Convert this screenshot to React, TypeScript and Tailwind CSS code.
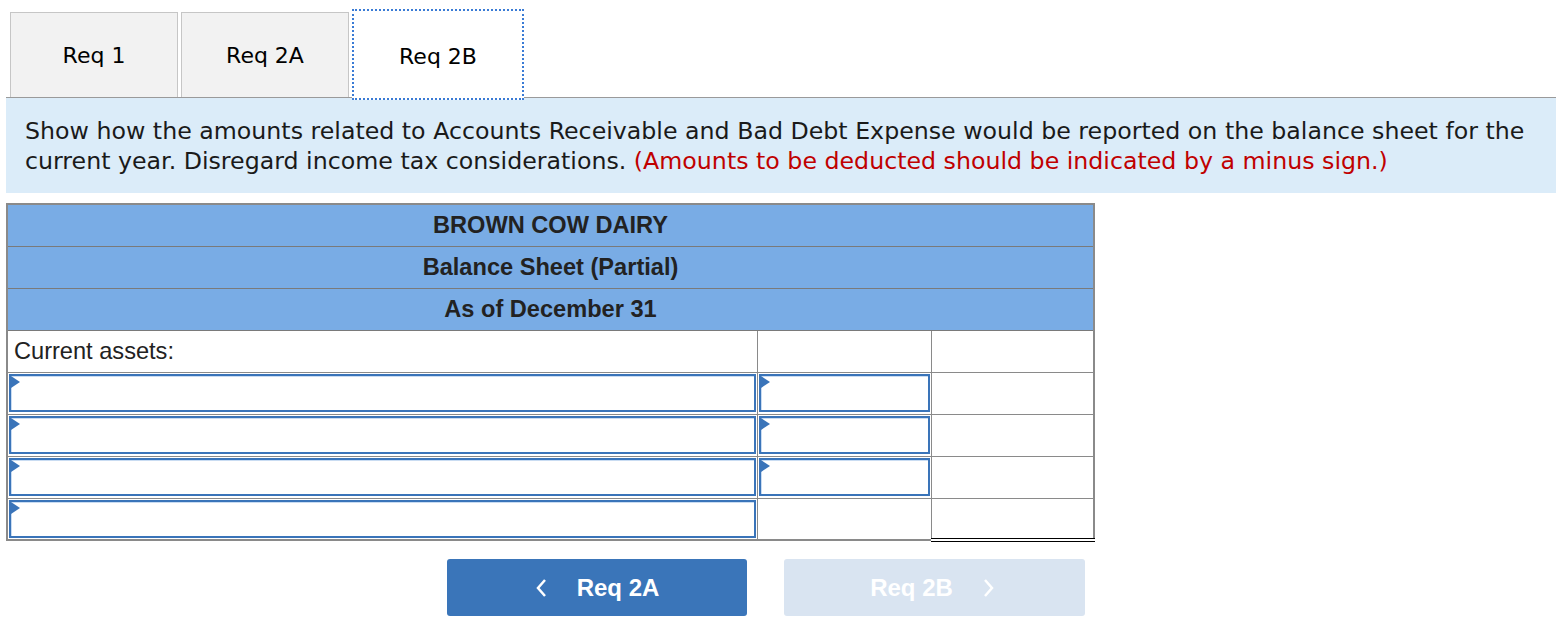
import React from 'react';

const Tab: React.FC<{ label: string; active?: boolean }> = ({ label, active }) =>
  active ? (
    <div className="relative z-10 h-[91px] w-[172px] -mt-[3px] -mb-[3px] pt-[4px] border-2 border-dotted border-[#3a7bd5] bg-white flex items-center justify-center text-[22px] text-black">
      {label}
    </div>
  ) : (
    <div className="h-[85px] w-[168px] border border-[#c6c6c6] border-b-0 bg-[#f2f2f2] flex items-center justify-center text-[22px] text-black">
      {label}
    </div>
  );

const Marker = () => (
  <svg className="absolute left-0 top-0" width="9" height="14" viewBox="0 0 9 14">
    <polygon points="0,0 9,6 0,12" fill="#3a74b9" />
  </svg>
);

const InputCell: React.FC = () => (
  <div className="relative h-[38px] m-[1px] border-2 border-[#3a74b9] bg-white shadow-[inset_1px_1px_0_#c9dcf2]">
    <Marker />
  </div>
);

const rows = [
  { a: true, b: true },
  { a: true, b: true },
  { a: true, b: true },
  { a: true, b: false },
];

const App: React.FC = () => {
  return (
    <div className="w-[1560px] h-[636px] bg-white font-['DejaVu_Sans',sans-serif] pt-[12px]">
      <div className="flex items-end pl-[10px] gap-[3px]">
        <Tab label="Req 1" />
        <Tab label="Req 2A" />
        <Tab label="Req 2B" active />
      </div>
      <div className="ml-[6px] mr-[4px] border-t border-[#9a9a9a] bg-[#dbecf9] px-[19px] pt-[18px] pb-[17px] text-[23.7px] leading-[30px] text-[#1a1a1a]">
        Show how the amounts related to Accounts Receivable and Bad Debt Expense would be reported on the balance sheet for the current year. Disregard income tax considerations.{' '}
        <span className="text-[#c00000]">(Amounts to be deducted should be indicated by a minus sign.)</span>
      </div>

      <div className="ml-[6px] mt-[10px] w-[1089px] font-['Liberation_Sans',Arial,sans-serif]">
        <table className="w-full border-collapse border-2 border-[#8a8a8a] table-fixed">
          <colgroup>
            <col className="w-[750px]" />
            <col className="w-[174px]" />
            <col />
          </colgroup>
          <tbody>
            {['BROWN COW DAIRY', 'Balance Sheet (Partial)', 'As of December 31'].map((t) => (
              <tr key={t}>
                <td colSpan={3} className="h-[42px] bg-[#79ace5] border border-[#7a7a7a] text-center font-bold text-[23.6px] leading-[26px] text-[#222]">
                  {t}
                </td>
              </tr>
            ))}
            <tr>
              <td className="h-[42px] border border-[#8a8a8a] px-[6px] text-[23.6px] leading-[26px] text-[#222]">Current assets:</td>
              <td className="border border-[#8a8a8a]"></td>
              <td className="border border-[#8a8a8a]"></td>
            </tr>
            {rows.map((r, i) => (
              <tr key={i}>
                <td className="h-[42px] p-0 border border-[#8a8a8a]">{r.a && <InputCell />}</td>
                <td className="p-0 border border-[#8a8a8a]">{r.b && <InputCell />}</td>
                <td
                  className={
                    i === rows.length - 1
                      ? 'p-0 border border-[#8a8a8a] border-b-[4px] border-b-black border-double'
                      : 'p-0 border border-[#8a8a8a]'
                  }
                ></td>
              </tr>
            ))}
          </tbody>
        </table>
      </div>

      <div className="flex gap-[37px] ml-[447px] mt-[17px] font-['Liberation_Sans',Arial,sans-serif]">
        <button className="w-[300px] h-[57px] rounded-[3px] bg-[#3a75b9] text-white font-bold text-[24px] flex items-center justify-center gap-[30px]">
          <svg width="12" height="20" viewBox="0 0 12 20">
            <polyline points="10,2 3,10 10,18" fill="none" stroke="white" strokeWidth="2.5" />
          </svg>
          <span>Req 2A</span>
        </button>
        <button className="w-[301px] h-[57px] rounded-[3px] bg-[#d9e4f1] text-white font-bold text-[24px] flex items-center justify-center gap-[30px] pr-[4px]">
          <span>Req 2B</span>
          <svg width="12" height="20" viewBox="0 0 12 20">
            <polyline points="2,2 9,10 2,18" fill="none" stroke="white" strokeWidth="2.5" />
          </svg>
        </button>
      </div>
    </div>
  );
};

export default App;
